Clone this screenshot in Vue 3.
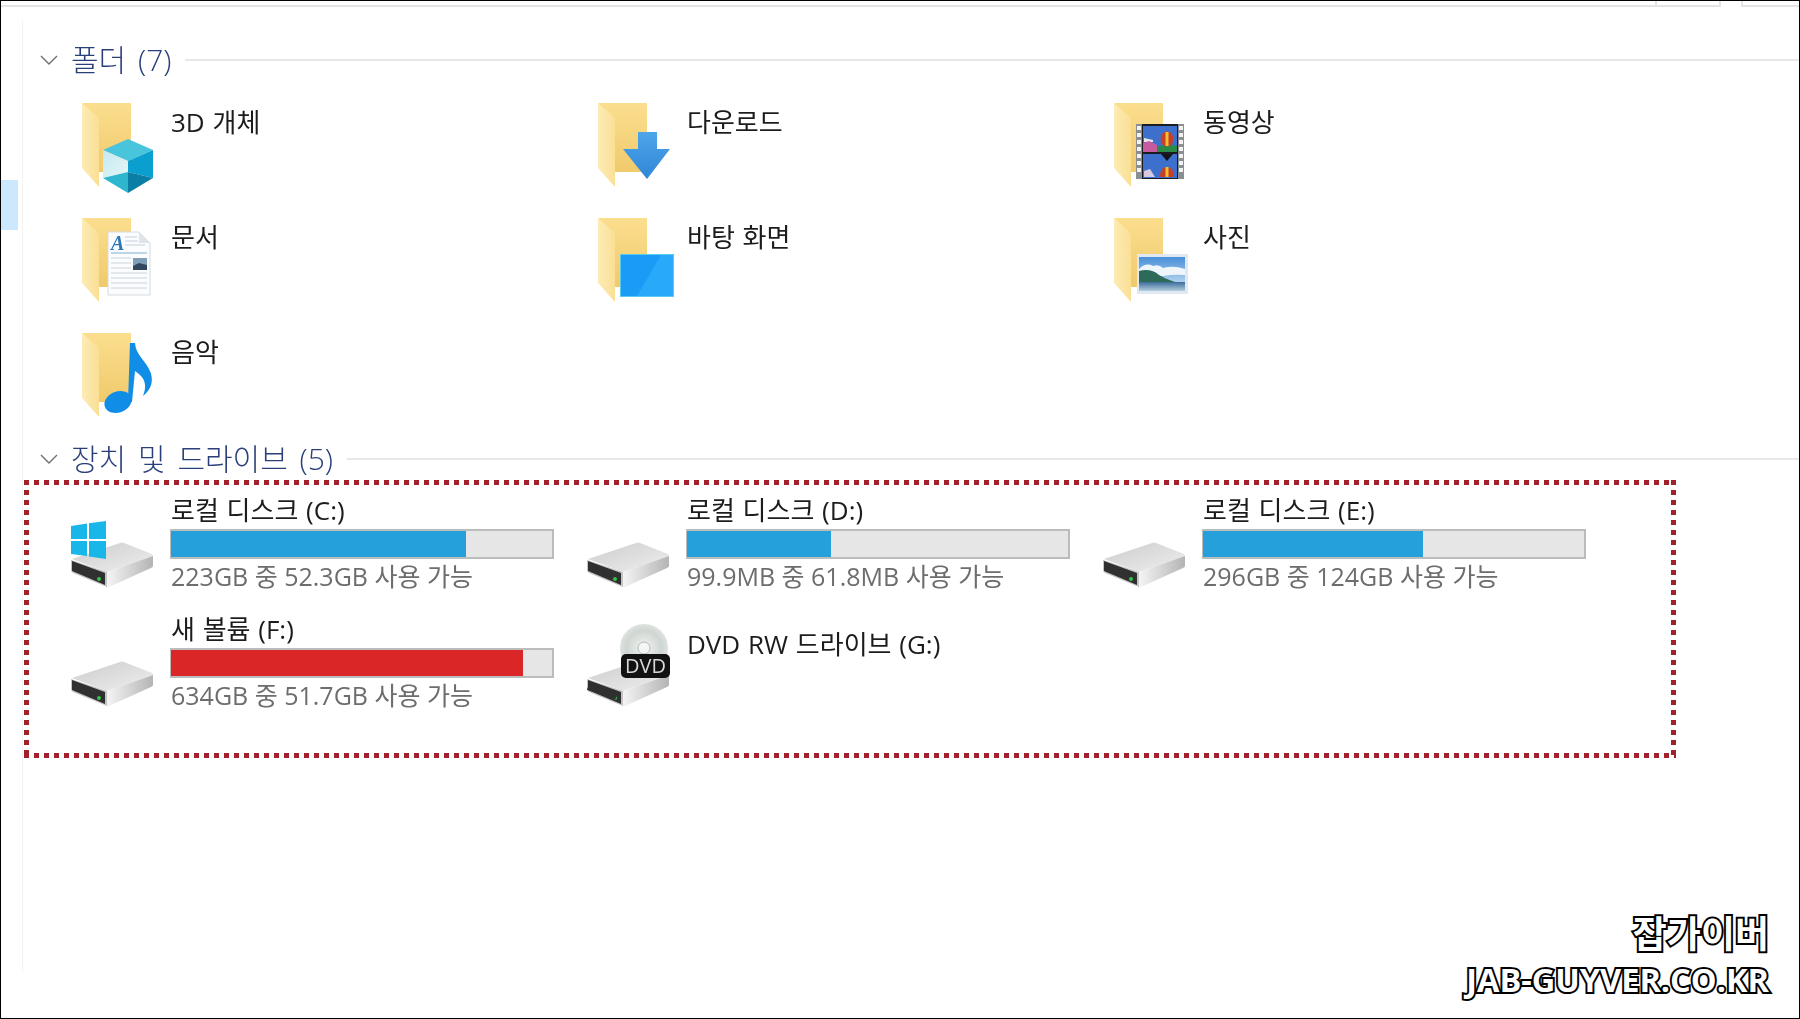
<script setup>
const folders = [
  { name: '3D 개체', icon: 'cube' },
  { name: '다운로드', icon: 'download' },
  { name: '동영상', icon: 'video' },
  { name: '문서', icon: 'doc' },
  { name: '바탕 화면', icon: 'desktop' },
  { name: '사진', icon: 'photo' },
  { name: '음악', icon: 'music' }
]

const drives = [
  { name: '로컬 디스크 (C:)', sub: '223GB 중 52.3GB 사용 가능', used: 77.300, win: true },
  { name: '로컬 디스크 (D:)', sub: '99.9MB 중 61.8MB 사용 가능', used: 37.800 },
  { name: '로컬 디스크 (E:)', sub: '296GB 중 124GB 사용 가능', used: 57.800 },
  { name: '새 볼륨 (F:)', sub: '634GB 중 51.7GB 사용 가능', used: 92.500, full: true },
  { name: 'DVD RW 드라이브 (G:)', dvd: true }
]
</script>

<template>
  <div class="window">
    <svg class="defs" width="0" height="0">
      <defs>
        <linearGradient id="flap" x1="0" y1="0" x2="1" y2="0">
          <stop offset="0" stop-color="#fdecb6" />
          <stop offset="1" stop-color="#fadf95" />
        </linearGradient>
        <linearGradient id="back" x1="0" y1="0" x2="0" y2="1">
          <stop offset="0" stop-color="#fbde8e" />
          <stop offset="1" stop-color="#f0ca6c" />
        </linearGradient>
        <linearGradient id="hddSide" x1="0" y1="0" x2="1" y2="0">
          <stop offset="0" stop-color="#f6f6f6" />
          <stop offset="1" stop-color="#b4b4b4" />
        </linearGradient>
        <linearGradient id="hddTop" x1="0" y1="0" x2="1" y2="1">
          <stop offset="0" stop-color="#cccccc" />
          <stop offset="1" stop-color="#efefef" />
        </linearGradient>
        <linearGradient id="arrow" x1="0" y1="0" x2="0" y2="1">
          <stop offset="0" stop-color="#4da6ea" />
          <stop offset="1" stop-color="#2f86d6" />
        </linearGradient>
        <linearGradient id="glass" x1="0" y1="0" x2="1" y2="1">
          <stop offset="0" stop-color="#c3e9f0" />
          <stop offset="1" stop-color="#e6f6f8" />
        </linearGradient>
        <linearGradient id="sky" x1="0" y1="0" x2="0" y2="1">
          <stop offset="0" stop-color="#4a8fd8" />
          <stop offset="1" stop-color="#d4eaf6" />
        </linearGradient>
        <linearGradient id="water" x1="0" y1="0" x2="0" y2="1">
          <stop offset="0" stop-color="#3c6c9c" />
          <stop offset="1" stop-color="#b4cedd" />
        </linearGradient>
        <radialGradient id="disc" cx="0.5" cy="0.5" r="0.6">
          <stop offset="0" stop-color="#f4f4f4" />
          <stop offset="0.6" stop-color="#cfd6d2" />
          <stop offset="1" stop-color="#e6ebe8" />
        </radialGradient>
        <symbol id="folder" viewBox="0 0 78 92" width="78" height="92">
          <path d="M1 0H50V69H18Z" fill="url(#back)" />
          <path d="M34 69H50V80H34Z" fill="#fff" />
          <path d="M1 0L18 15V84L1 65Z" fill="url(#flap)" />
        </symbol>
        <symbol id="hdd" viewBox="0 0 84 46" width="84" height="46">
          <path d="M2 17L50 1Q52 0 54 1L82 12Q83 13 83 14L37 30Z" fill="url(#hddTop)" />
          <path d="M37 30L83 14V24Q83 25 81 26L39 45Q37 46 36 45Z" fill="url(#hddSide)" />
          <path d="M1 18L37 30V45L3 31Q1 30 1 28Z" fill="#c4c4c4" />
          <path d="M2 19L35 31V43L2 29Z" fill="#303030" />
          <circle cx="29" cy="37" r="2" fill="#35c24a" />
        </symbol>
      </defs>
    </svg>

    <div class="topbar">
      <div class="top-main"></div>
      <div class="top-tab"></div>
      <div class="top-gap"></div>
      <div class="top-rest"></div>
    </div>

    <div class="body">
      <div class="nav">
        <div class="nav-selected"></div>
      </div>

      <div class="content">
        <div class="group-head">
          <svg class="chevron" width="18" height="11" viewBox="0 0 18 11">
            <path d="M1 1L9 9L17 1" fill="none" stroke="#707070" stroke-width="1.4" />
          </svg>
          <span class="group-title">폴더 (7)</span>
          <span class="group-line"></span>
        </div>

        <div class="folders">
          <div v-for="f in folders" :key="f.name" class="folder">
            <svg class="folder-icon" width="78" height="92" viewBox="0 0 78 92">
              <use href="#folder" />

              <g v-if="f.icon === 'cube'">
                <path d="M47 36L72 47L47 58L22 47Z" fill="#48c5dc" />
                <path d="M22 47L47 58V69L22 75Z" fill="url(#glass)" />
                <path d="M47 58L72 47V75L47 69Z" fill="#0a9fce" />
                <path d="M22 75L47 69V90Z" fill="#2fb6cf" />
                <path d="M72 75L47 69V90Z" fill="#0b7ea6" />
              </g>

              <path v-if="f.icon === 'download'" d="M41 29H60V46H73L50 76L26 46H41Z" fill="url(#arrow)" />

              <g v-if="f.icon === 'video'">
                <rect x="23" y="21" width="48" height="55" fill="#8c8f92" />
                <rect x="29" y="21" width="36" height="55" fill="#1c1c20" />
                <rect x="30" y="23" width="34" height="26" fill="#3c70cc" />
                <rect x="30" y="51" width="34" height="24" fill="#3c70cc" />
                <path d="M31 35L40 37V39H31Z" fill="#e8e4ec" />
                <path d="M30 49V40L36 38L44 42V49Z" fill="#c85aa0" />
                <path d="M44 49V44Q54 40 64 43V49Z" fill="#2c8a48" />
                <ellipse cx="54" cy="36" rx="6.500" ry="7.500" fill="#c8402a" />
                <path d="M52.500 29H55.500V43H52.500Z" fill="#f0c030" />
                <path d="M48 51H60L54 58Z" fill="#14141a" />
                <path d="M31 74V68L37 66L42 74Z" fill="#d8c8e0" />
                <path d="M47 74Q47 64 54 64Q61 64 61 74Z" fill="#c8402a" />
                <rect x="52.500" y="64" width="3" height="10" fill="#f0c030" />
                <g fill="#f2f2f2">
                  <rect v-for="n in 7" :key="n" x="24" :y="16 + n * 7" width="4" height="4" />
                  <rect v-for="n in 7" :key="'r' + n" x="66" :y="16 + n * 7" width="4" height="4" />
                </g>
              </g>

              <g v-if="f.icon === 'doc'">
                <path d="M27 14H58L69 25V77H27Z" fill="#fbfcfd" stroke="#d6dbe0" />
                <path d="M58 14V25H69Z" fill="#dfe4ea" />
                <text x="30" y="32" class="doc-letter">A</text>
                <path d="M44 19H56M44 23H57M44 27H64" stroke="#c3cfdb" stroke-width="1" />
                <path d="M30 35H66" stroke="#7fb0d2" stroke-width="1.2" />
                <path d="M30 40H50M30 45H50M30 50H50M30 55H66M30 60H66M30 65H66M30 70H66" stroke="#ccd4dc" stroke-width="1" />
                <rect x="52" y="40" width="14" height="12" fill="#7f9fb8" />
                <path d="M52 48L58 45L66 47V52H52Z" fill="#32485e" />
              </g>

              <g v-if="f.icon === 'desktop'">
                <rect x="23.500" y="36.500" width="53" height="42" fill="#1a9bf6" stroke="#5ccbf0" />
                <path d="M40 78L64 37H76V78Z" fill="#28a9fa" />
              </g>

              <g v-if="f.icon === 'photo'">
                <rect x="24" y="36" width="51" height="40" fill="#e0e8f2" />
                <rect x="26" y="39" width="46" height="34" fill="url(#sky)" />
                <path d="M26 51Q33 44 40 48Q46 46 50 50Q60 47 72 51V57Q60 56 50 58H26Z" fill="#eef6fb" />
                <path d="M26 65V53Q38 50 46 57Q54 62 72 67V65Z" fill="#2e6a58" />
                <rect x="26" y="64" width="46" height="9" fill="url(#water)" />
              </g>

              <g v-if="f.icon === 'music'" fill="#108de6">
                <ellipse cx="37" cy="69" rx="14" ry="10.500" transform="rotate(-22 37 69)" />
                <path d="M47 69L49 10H54C55 22 63 26 68 36C74 47 70 57 62 63C66 53 65 45 54 38L51 69Z" />
              </g>
            </svg>
            <span class="folder-name">{{ f.name }}</span>
          </div>
        </div>

        <div class="group-head">
          <svg class="chevron" width="18" height="11" viewBox="0 0 18 11">
            <path d="M1 1L9 9L17 1" fill="none" stroke="#707070" stroke-width="1.4" />
          </svg>
          <span class="group-title">장치 및 드라이브 (5)</span>
          <span class="group-line"></span>
        </div>

        <div class="drives">
          <div v-for="d in drives" :key="d.name" class="drive">
            <svg v-if="d.dvd" class="drive-icon" width="84" height="84" viewBox="0 0 84 84">
              <use href="#hdd" y="38" />
              <rect x="3" y="61" width="30" height="6" fill="#303030" transform="rotate(20 3 61)" />
              <circle cx="58" cy="25" r="24" fill="url(#disc)" />
              <circle cx="58" cy="25" r="6" fill="#f4f6f5" stroke="#b4bab7" />
              <rect x="35" y="31" width="49" height="24" rx="5" fill="#111" />
              <text x="59.500" y="50" class="dvd-text">DVD</text>
            </svg>
            <svg v-else class="drive-icon" width="84" height="70" viewBox="0 0 84 70">
              <use href="#hdd" y="24" />
              <g v-if="d.win" fill="#19b6ea">
                <path d="M1 8L17 5.500V21H1Z" />
                <path d="M19 5.200L36 3V21H19Z" />
                <path d="M1 23H17V38L1 36Z" />
                <path d="M19 23H36V41L19 38.500Z" />
              </g>
            </svg>
            <div class="drive-info" :class="{ 'only-name': d.dvd }">
              <div class="drive-name">{{ d.name }}</div>
              <template v-if="!d.dvd">
                <div class="bar">
                  <div class="bar-fill" :class="{ full: d.full }" :style="{ width: d.used + '%' }"></div>
                </div>
                <div class="drive-sub">{{ d.sub }}</div>
              </template>
            </div>
          </div>
        </div>
      </div>
    </div>

    <div class="watermark">
      <div class="wm-name">잡가이버</div>
      <div class="wm-url">JAB-GUYVER.CO.KR</div>
    </div>
  </div>
</template>

<style scoped>
.window {
  position: relative;
  width: 1800px;
  height: 1019px;
  box-sizing: border-box;
  border: 1px solid #000;
  background: #fff;
  overflow: hidden;
  display: flex;
  flex-direction: column;
  font-family: "Open Sans", "Noto Sans CJK KR", sans-serif;
  color: #1c1c1c;
}

.defs {
  position: absolute;
}

.topbar {
  display: flex;
  height: 6px;
  flex-shrink: 0;
}

.top-main {
  flex: 1;
  border-bottom: 2px solid #e4e4e4;
}

.top-tab {
  width: 62px;
  border: 2px solid #e4e4e4;
  border-top: 0;
}

.top-gap {
  width: 20px;
}

.top-rest {
  width: 56px;
  border-left: 2px solid #e4e4e4;
  border-bottom: 2px solid #e4e4e4;
}

.body {
  flex: 1;
  display: flex;
}

.nav {
  width: 21px;
  margin: 13px 0 47px;
  border-right: 1px solid #f2f2f2;
  flex-shrink: 0;
}

.nav-selected {
  width: 17px;
  height: 50px;
  margin-top: 160px;
  background: #cce8ff;
}

.content {
  flex: 1;
  padding-top: 37px;
}

.group-head {
  display: flex;
  align-items: center;
  height: 32px;
  padding-left: 17px;
  filter: blur(0.4px);
}

.chevron {
  flex-shrink: 0;
  margin-right: 13px;
}

.group-title {
  font-size: 30px;
  font-weight: 300;
  line-height: 32px;
  word-spacing: 4px;
  color: #2a3f7a;
  white-space: nowrap;
}

.group-line {
  flex: 1;
  height: 2px;
  margin-left: 14px;
  background: #e8e8e8;
}

.folders {
  display: grid;
  grid-template-columns: repeat(3, 516px);
  grid-auto-rows: 110px;
  row-gap: 5px;
  margin: 27px 0 0 58px;
}

.folder {
  display: flex;
  align-items: flex-start;
  filter: blur(0.4px);
}

.folder-icon {
  flex-shrink: 0;
  margin-right: 12px;
}

.folder-name {
  font-size: 26px;
  line-height: 32px;
  word-spacing: 1px;
  margin-top: 3px;
}

.doc-letter {
  font-family: "Liberation Serif", serif;
  font-style: italic;
  font-weight: 700;
  font-size: 20px;
  fill: #2a78b8;
}

.dvd-text {
  font-family: "Open Sans", sans-serif;
  font-size: 20px;
  fill: #d8d8d8;
  text-anchor: middle;
}

.drives {
  display: grid;
  grid-template-columns: repeat(3, 516px);
  row-gap: 25px;
  align-content: start;
  box-sizing: border-box;
  width: 1652px;
  height: 278px;
  margin: 5px 0 0 1px;
  padding-top: 16px;
  background:
    repeating-linear-gradient(90deg, #a2202a 0 5px, transparent 5px 10px) top left / 100% 5px no-repeat,
    repeating-linear-gradient(90deg, #a2202a 0 5px, transparent 5px 10px) bottom left / 100% 5px no-repeat,
    repeating-linear-gradient(180deg, #a2202a 0 5px, transparent 5px 10px) top left / 5px 100% no-repeat,
    repeating-linear-gradient(180deg, #a2202a 0 5px, transparent 5px 10px) top right / 5px 100% no-repeat;
}

.drive {
  display: flex;
  align-items: flex-end;
  height: 94px;
  padding-left: 46px;
}

.drive-icon {
  flex-shrink: 0;
  margin: 0 16px 2px 0;
  filter: blur(0.4px);
}

.drive-info {
  flex-shrink: 0;
  width: 384px;
  height: 94px;
}

.drive-info.only-name {
  padding-top: 15px;
  box-sizing: border-box;
}

.drive-name {
  font-size: 26px;
  line-height: 28px;
  word-spacing: 1px;
  padding-left: 1px;
  white-space: nowrap;
  filter: blur(0.4px);
}

.bar {
  height: 30px;
  box-sizing: border-box;
  margin-top: 5px;
  border: 2px solid #bcbcbc;
  border-left-width: 1px;
  background: #e6e6e6;
}

.bar-fill {
  height: 100%;
  background: #26a0da;
}

.bar-fill.full {
  background: #da2626;
}

.drive-sub {
  font-size: 25px;
  line-height: 28px;
  margin-top: 3px;
  padding-left: 1px;
  color: #6d6d6d;
  white-space: nowrap;
  filter: blur(0.4px);
}

.watermark {
  position: absolute;
  right: 30px;
  top: 910px;
  text-align: right;
  font-family: "Open Sans", "Noto Sans CJK KR", sans-serif;
  font-weight: 700;
  color: #fff;
  -webkit-text-stroke: 4px #000;
  paint-order: stroke fill;
}

.wm-name {
  font-size: 37px;
  line-height: 46px;
}

.wm-url {
  font-size: 32.500px;
  line-height: 40px;
  margin-top: 3px;
}
</style>
